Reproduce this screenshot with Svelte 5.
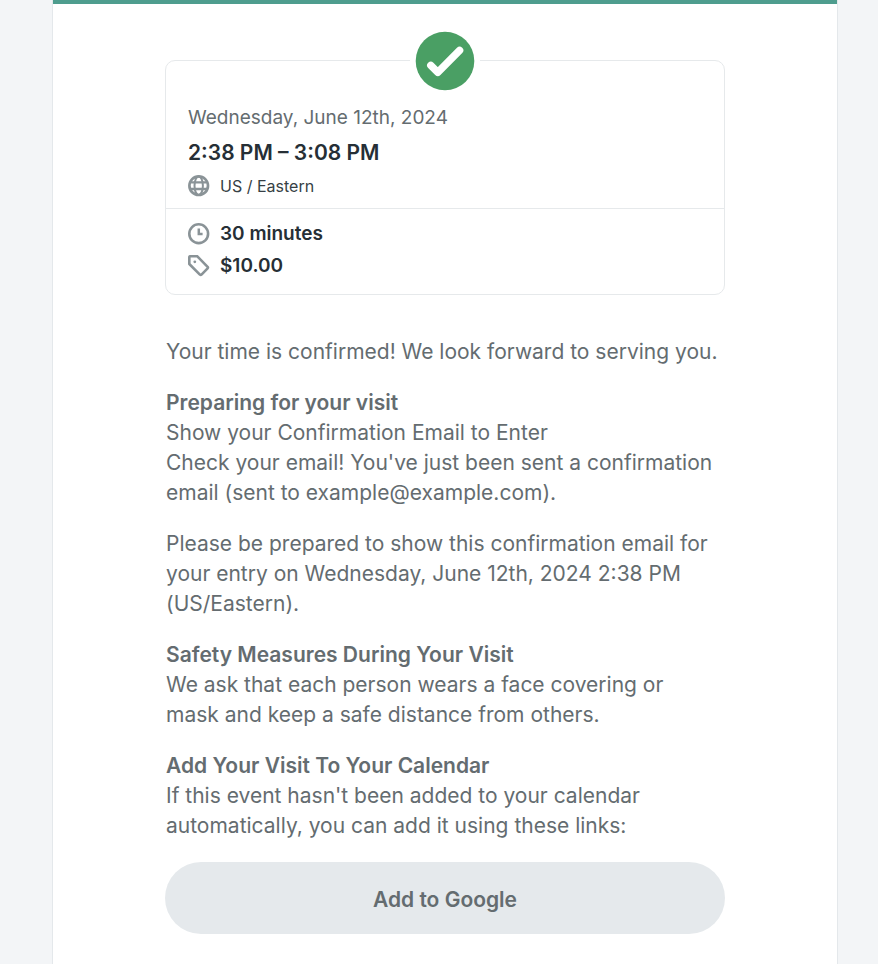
<script>
  const appointment = {
    date: 'Wednesday, June 12th, 2024',
    time: '2:38 PM – 3:08 PM',
    zone: 'US / Eastern',
    duration: '30 minutes',
    price: '$10.00'
  };
</script>

<div class="page">
  <main class="sheet">
    <div class="content">
      <section class="card" aria-label="Appointment details">
        <div class="badge">
          <svg width="60" height="60" viewBox="0 0 60 60" role="img" aria-label="Confirmed">
            <circle cx="30" cy="30" r="29.3" fill="#4a9f64" />
            <path d="M15.8 34.4 L22.8 41.4 L44.6 19.4" fill="none" stroke="#fff" stroke-width="7.4" stroke-linecap="round" stroke-linejoin="round" />
          </svg>
        </div>
        <div class="when">
          <div class="date">{appointment.date}</div>
          <div class="time">{appointment.time}</div>
          <div class="row zone">
            <svg class="icon" viewBox="0 0 22 22" aria-hidden="true">
              <circle cx="10.7" cy="10.7" r="9.3" fill="none" stroke="#8a9397" stroke-width="2.7" />
              <ellipse cx="10.7" cy="10.7" rx="4.2" ry="9.3" fill="none" stroke="#8a9397" stroke-width="2" />
              <path d="M2 7.4H19.4M2 14H19.4" fill="none" stroke="#8a9397" stroke-width="2.4" />
            </svg>
            <span>{appointment.zone}</span>
          </div>
        </div>
        <div class="facts">
          <div class="row">
            <svg class="icon" viewBox="0 0 22 22" aria-hidden="true">
              <circle cx="10.7" cy="10.7" r="9.4" fill="none" stroke="#8a9397" stroke-width="2.6" />
              <path d="M10.8 5.6V11H14.6" fill="none" stroke="#8a9397" stroke-width="2.5" />
            </svg>
            <span>{appointment.duration}</span>
          </div>
          <div class="row">
            <svg class="icon" viewBox="0 0 22 22" aria-hidden="true">
              <path d="M1.3 2.4Q1.3 1.2 2.5 1.2H9.1L19.6 11.8Q20.3 12.6 19.6 13.4L13.5 19.6Q12.7 20.3 11.9 19.6L1.3 9Z" fill="none" stroke="#8a9397" stroke-width="2.6" stroke-linejoin="round" />
              <circle cx="6.8" cy="6.8" r="1.4" fill="#8a9397" />
            </svg>
            <span>{appointment.price}</span>
          </div>
        </div>
      </section>

      <div class="message">
        <p>Your time is confirmed! We look forward to serving you.</p>
        <p>
          <strong>Preparing for your visit</strong><br />
          Show your Confirmation Email to Enter<br />
          Check your email! You've just been sent a confirmation email (sent to example@example.com).
        </p>
        <p>
          Please be prepared to show this confirmation email for your entry on Wednesday, June 12th, 2024 2:38 PM (US/Eastern).
        </p>
        <p>
          <strong>Safety Measures During Your Visit</strong><br />
          We ask that each person wears a face covering or mask and keep a safe distance from others.
        </p>
        <p>
          <strong>Add Your Visit To Your Calendar</strong><br />
          If this event hasn't been added to your calendar automatically, you can add it using these links:
        </p>
      </div>
      <button class="add" type="button">Add to Google</button>
    </div>
  </main>
</div>

<style>
  :global(body) {
    background: #f3f5f7;
  }
  .page {
    box-sizing: border-box;
    min-height: 100vh;
    padding: 0 40px 0 52px;
    display: flex;
    font-family: Inter, 'Liberation Sans', sans-serif;
    color: #646c70;
  }
  .sheet {
    flex: 1;
    min-width: 0;
    background: #fff;
    border: solid #e4e8eb;
    border-width: 0 1px;
    box-shadow: inset 0 4px #4e9d8e;
    padding: 60px 20px 30px;
  }
  .content {
    max-width: 560px;
    margin: 0 auto;
  }
  .card {
    position: relative;
    border: 1px solid #e6e9eb;
    border-radius: 10px;
  }
  .badge {
    position: absolute;
    top: -30px;
    left: 50%;
    transform: translateX(-50%);
    padding: 0 5px;
    background: #fff;
  }
  .badge svg {
    display: block;
  }
  .when {
    padding: 44px 22px 11px;
    border-bottom: 1px solid #e6e9eb;
  }
  .date {
    font-size: 19px;
    line-height: 26px;
  }
  .time {
    font-size: 21px;
    line-height: 44px;
    font-weight: 600;
    color: #262f36;
  }
  .row {
    display: flex;
    align-items: center;
    gap: 10px;
    line-height: 32px;
  }
  .zone {
    font-size: 16px;
    line-height: 22px;
    color: #363f45;
  }
  .icon {
    width: 22px;
    height: 22px;
    flex: none;
  }
  .facts {
    padding: 9px 22px 12px;
    font-size: 19px;
    font-weight: 600;
    color: #262f36;
  }
  .message {
    padding: 42px 5px 0 1px;
    font-size: 21px;
    line-height: 30px;
  }
  p {
    margin: 0 0 21px;
  }
  strong {
    font-weight: 600;
  }
  .add {
    display: block;
    width: 100%;
    border: 0;
    border-radius: 36px;
    padding: 23px 24px 19px;
    background: #e5e9ec;
    color: #646c70;
    font: 600 21px/30px Inter, 'Liberation Sans', sans-serif;
    cursor: pointer;
  }
</style>
